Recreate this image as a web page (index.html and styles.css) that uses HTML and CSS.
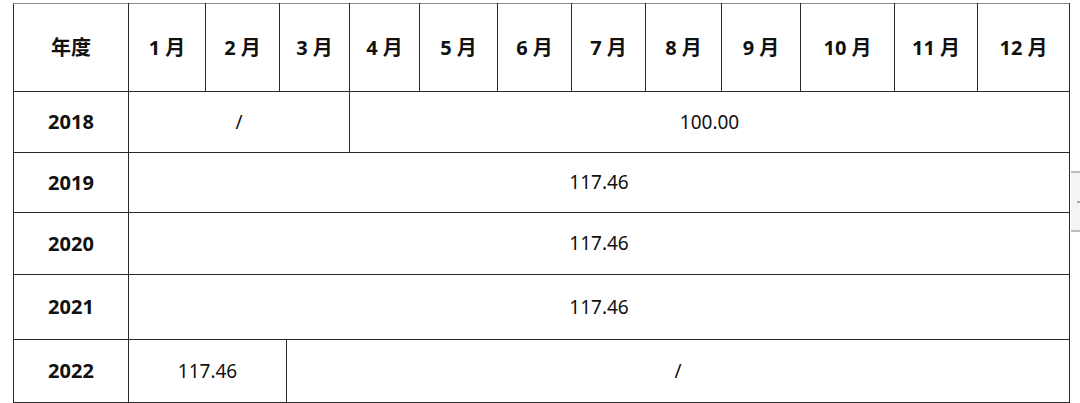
FILE: index.html
```html
<!DOCTYPE html>
<html lang="zh-CN">
<head>
<meta charset="utf-8">
<title>年度月份数据表</title>
<link rel="stylesheet" href="styles.css">
</head>
<body>
<div class="page">
  <table class="data">
    <colgroup>
      <col class="c-year">
      <col class="c1"><col class="c2"><col class="c3a"><col class="c3b">
      <col class="c4"><col class="c5"><col class="c6"><col class="c7">
      <col class="c8"><col class="c9"><col class="c10"><col class="c11"><col class="c12">
    </colgroup>
    <thead>
      <tr class="r-head">
        <th>年度</th>
        <th>1 月</th>
        <th>2 月</th>
        <th colspan="2">3 月</th>
        <th>4 月</th>
        <th>5 月</th>
        <th>6 月</th>
        <th>7 月</th>
        <th>8 月</th>
        <th>9 月</th>
        <th>10 月</th>
        <th>11 月</th>
        <th>12 月</th>
      </tr>
    </thead>
    <tbody>
      <tr class="r-2018">
        <th>2018</th>
        <td colspan="4">/</td>
        <td colspan="9">100.00</td>
      </tr>
      <tr class="r-2019">
        <th>2019</th>
        <td colspan="13">117.46</td>
      </tr>
      <tr class="r-2020">
        <th>2020</th>
        <td colspan="13">117.46</td>
      </tr>
      <tr class="r-2021">
        <th>2021</th>
        <td colspan="13">117.46</td>
      </tr>
      <tr class="r-2022">
        <th>2022</th>
        <td colspan="3">117.46</td>
        <td colspan="10">/</td>
      </tr>
    </tbody>
  </table>
  <div class="scroll-tab"><span class="scroll-dash"></span></div>
</div>
</body>
</html>
```
FILE: styles.css
```css
html, body {
  margin: 0;
  padding: 0;
  background: #ffffff;
}

.page {
  display: flex;
  align-items: flex-start;
  padding: 3px 0 0 13px;
  font-family: "Noto Sans", "Open Sans", "Noto Sans CJK SC", sans-serif;
  color: #111111;
}

.data {
  border-collapse: collapse;
  table-layout: fixed;
  width: 1055px;
  font-size: 19px;
}

.data th,
.data td {
  border: 1px solid #2a2a2a;
  padding: 0;
  text-align: center;
  vertical-align: middle;
  font-weight: 400;
  line-height: 1.2;
}

.data th {
  font-weight: 700;
  font-size: 20px;
}

.data thead th {
  border-top-color: #8a8a8a;
}

.c-year { width: 115px; }
.c1 { width: 77px; }
.c2 { width: 74px; }
.c3a { width: 7px; }
.c3b { width: 63px; }
.c4 { width: 70px; }
.c5 { width: 78px; }
.c6 { width: 74px; }
.c7 { width: 74px; }
.c8 { width: 76px; }
.c9 { width: 79px; }
.c10 { width: 94px; }
.c11 { width: 83px; }
.c12 { width: 92px; }

.r-head { height: 88px; }
.r-2018 { height: 61px; }
.r-2019 { height: 60px; }
.r-2020 { height: 62px; }
.r-2021 { height: 65px; }
.r-2022 { height: 63px; }

.scroll-tab {
  flex: none;
  display: flex;
  align-items: center;
  justify-content: flex-end;
  width: 10px;
  height: 57px;
  margin: 168px 0 0 1px;
  background: #f4f4f4;
  border-top: 2px solid #bdbdbd;
  border-bottom: 2px solid #bdbdbd;
}

.scroll-dash {
  display: block;
  width: 4px;
  height: 2px;
  background: #a8a8a8;
}
```
